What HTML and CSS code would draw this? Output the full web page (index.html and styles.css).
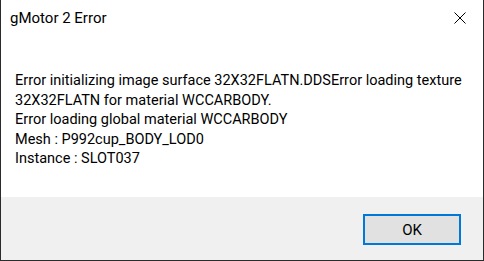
FILE: index.html
```html
<!DOCTYPE html>
<html>
<head>
<meta charset="utf-8">
<link rel="stylesheet" href="styles.css">
</head>
<body>
<div class="dialog">
  <div class="titlebar">
    <span class="title">gMotor 2 Error</span>
    <span class="close">
      <svg width="12" height="12" viewBox="0 0 12 12"><path d="M0.5 0.5 L11.5 11.5 M11.5 0.5 L0.5 11.5" stroke="#000" stroke-width="1" fill="none"/></svg>
    </span>
  </div>
  <div class="content">
    <p class="msg">Error initializing image surface 32X32FLATN.DDSError loading texture<br>32X32FLATN for material WCCARBODY.<br>Error loading global material WCCARBODY<br>Mesh : P992cup_BODY_LOD0<br>Instance : SLOT037</p>
  </div>
  <div class="footer">
    <button class="ok">OK</button>
  </div>
</div>
</body>
</html>
```

FILE: styles.css
```css
html, body {
  margin: 0;
  padding: 0;
  background: #fff;
}
.dialog {
  width: 482px;
  height: 260px;
  border-left: 1px solid #2b2b2b;
  border-right: 1px solid #2b2b2b;
  border-bottom: 1px solid #2b2b2b;
  display: flex;
  flex-direction: column;
  font-family: Roboto, "Noto Sans", sans-serif;
  color: #000;
  background: #fff;
}
.titlebar {
  height: 36px;
  display: flex;
  align-items: center;
  justify-content: space-between;
  padding: 0 17px 0 9px;
  flex: none;
}
.title {
  font-size: 15px;
  line-height: 20px;
  padding-bottom: 1px;
}
.close {
  display: flex;
  width: 12px;
  height: 12px;
}
.content {
  flex: 1;
  padding: 35px 0 0 14px;
}
.msg {
  margin: 0;
  font-size: 14.5px;
  line-height: 19.5px;
  white-space: nowrap;
}
.footer {
  flex: none;
  height: 63px;
  background: #f0f0f0;
  display: flex;
  justify-content: flex-end;
  align-items: flex-start;
  padding: 17px 22px 0 0;
  box-sizing: border-box;
}
.ok {
  width: 98px;
  height: 31px;
  border: 2px solid #0078d7;
  background: #e1e1e1;
  font-family: inherit;
  font-size: 15px;
  color: #000;
  padding: 0;
  margin: 0;
}
```
